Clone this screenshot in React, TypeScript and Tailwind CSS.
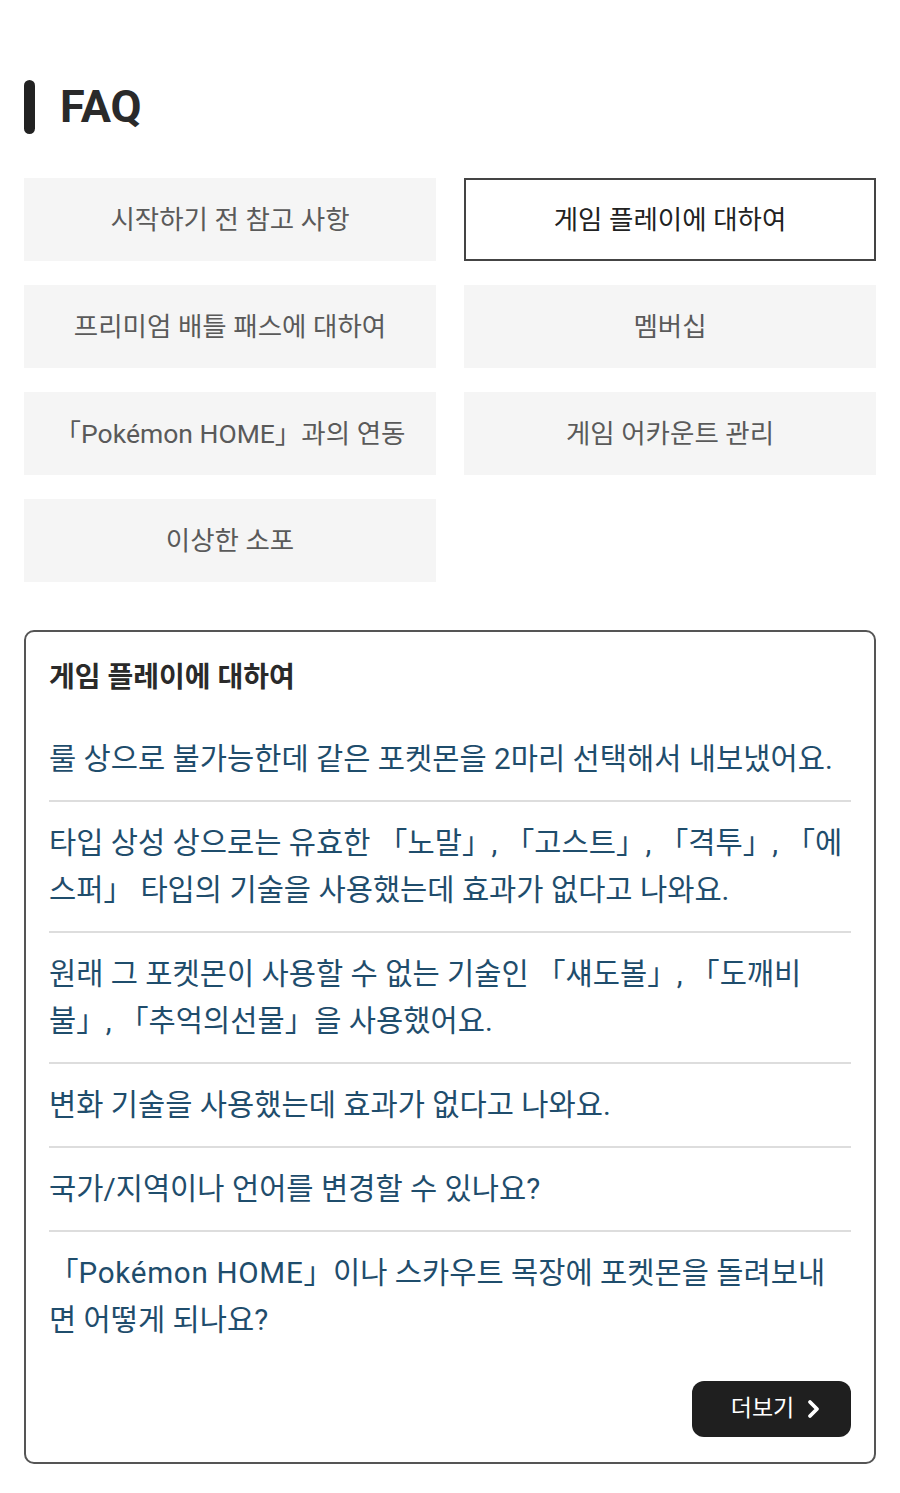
import React from "react";

const font = { fontFamily: 'Roboto, "Noto Sans CJK KR", sans-serif' };

const cats = [
  { label: "시작하기 전 참고 사항", active: false },
  { label: "게임 플레이에 대하여", active: true },
  { label: "프리미엄 배틀 패스에 대하여", active: false },
  { label: "멤버십", active: false },
  { label: "「Pokémon HOME」과의 연동", active: false },
  { label: "게임 어카운트 관리", active: false },
  { label: "이상한 소포", active: false },
];

const questions: React.ReactNode[] = [
  "룰 상으로 불가능한데 같은 포켓몬을 2마리 선택해서 내보냈어요.",
  "타입 상성 상으로는 유효한 「노말」, 「고스트」, 「격투」, 「에스퍼」 타입의 기술을 사용했는데 효과가 없다고 나와요.",
  "원래 그 포켓몬이 사용할 수 없는 기술인 「섀도볼」, 「도깨비불」, 「추억의선물」을 사용했어요.",
  "변화 기술을 사용했는데 효과가 없다고 나와요.",
  "국가/지역이나 언어를 변경할 수 있나요?",
  <>
    「<span className="tracking-[0.7px]">Pokémon HOME</span>」이나 스카우트 목장에 포켓몬을 돌려보내면 어떻게 되나요?
  </>,
];

export default function App() {
  return (
    <div className="w-[900px] min-h-[1493px] bg-white px-[24px] pt-[80px]" style={font}>
      <div className="flex items-center gap-[25px]">
        <div className="w-[11px] h-[54px] rounded-full bg-[#222222]" />
        <h1 className="text-[45px] leading-[54px] font-bold text-[#2a2a2a]">FAQ</h1>
      </div>

      <div className="mt-[44px] grid grid-cols-2 gap-x-[28px] gap-y-[24px]">
        {cats.map((c) => (
          <div
            key={c.label}
            className={
              c.active
                ? "h-[83px] flex items-center justify-center border-2 border-[#444444] bg-white text-[26.5px] text-[#222222]"
                : "h-[83px] flex items-center justify-center bg-[#f5f5f5] text-[26.5px] text-[#5a5a5a]"
            }
          >
            {c.label}
          </div>
        ))}
      </div>

      <div className="mt-[48px] border-2 border-[#555555] rounded-[10px] px-[23px] pt-[28px] pb-[25px]">
        <h2 className="text-[28px] leading-[36px] font-bold text-[#2a2a2a]">게임 플레이에 대하여</h2>
        <div className="mt-[22px]">
          {questions.map((q, i) => (
            <div
              key={i}
              className={
                i < questions.length - 1
                  ? "py-[17.5px] border-b-2 border-[#dddddd] text-[29.6px] leading-[47px] text-[#1f4d6c]"
                  : "py-[17.5px] text-[29.6px] leading-[47px] text-[#1f4d6c]"
              }
            >
              {q}
            </div>
          ))}
        </div>
        <div className="flex justify-end mt-[20px]">
          <button className="w-[159px] h-[56px] rounded-[12px] bg-[#1f1f1f] text-white flex items-center justify-center gap-[12px] text-[23px] pl-[10px]">
            <span>더보기</span>
            <svg width="16" height="22" viewBox="0 0 16 22" fill="none">
              <path d="M4 4 L11 11 L4 18" stroke="white" strokeWidth="3.8" strokeLinecap="round" strokeLinejoin="round" />
            </svg>
          </button>
        </div>
      </div>
    </div>
  );
}
